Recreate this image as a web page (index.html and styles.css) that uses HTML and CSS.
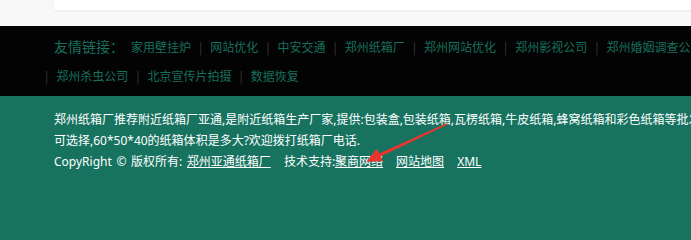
FILE: index.html
```html
<!DOCTYPE html>
<html lang="zh-CN">
<head>
<meta charset="utf-8">
<title>郑州亚通纸箱厂</title>
<link rel="stylesheet" href="styles.css">
</head>
<body>
<div class="page">
  <div class="top"><div class="card"></div></div>
  <div class="links">
    <div class="wrap">
      <div class="row">
        <span class="label">友情链接：</span>
        <a href="#">家用壁挂炉</a><span class="sep">|</span>
        <a href="#">网站优化</a><span class="sep">|</span>
        <a href="#">中安交通</a><span class="sep">|</span>
        <a href="#">郑州纸箱厂</a><span class="sep">|</span>
        <a href="#">郑州网站优化</a><span class="sep">|</span>
        <a href="#">郑州影视公司</a><span class="sep">|</span>
        <a href="#">郑州婚姻调查公司</a>
      </div>
      <div class="row row-second">
        <span class="sep">|</span><a href="#">郑州杀虫公司</a><span class="sep">|</span>
        <a href="#">北京宣传片拍摄</a><span class="sep">|</span>
        <a href="#">数据恢复</a>
      </div>
    </div>
  </div>
  <div class="footer">
    <div class="wrap">
      <p class="line">郑州纸箱厂推荐附近纸箱厂亚通,是附近纸箱生产厂家,提供:包装盒,包装纸箱,瓦楞纸箱,牛皮纸箱,蜂窝纸箱和彩色纸箱等批发定做,多种规格</p>
      <p class="line">可选择,60*50*40的纸箱体积是多大?欢迎拨打纸箱厂电话.</p>
      <p class="line copy">
        <span class="grp first">CopyRight © 版权所有: <a href="#">郑州亚通纸箱厂</a></span>
        <span class="grp">技术支持:<a href="#">聚商网络</a></span>
        <span class="grp"><a href="#">网站地图</a></span>
        <span class="grp"><a href="#">XML</a></span>
      </p>
    </div>
  </div>
  <svg class="arrow" width="691" height="202" viewBox="0 0 691 202" aria-hidden="true">
    <polygon points="446.6,123.2 379.2,153.6 376.6,148.8 366.5,161.8 383,161.2 380.6,156.6 447.4,124.8" fill="#e8352e"/>
  </svg>
</div>
</body>
</html>
```

FILE: styles.css
```css
html, body {
  margin: 0;
  padding: 0;
}
body {
  font-family: "Noto Sans CJK SC", sans-serif;
  overflow: hidden;
  background: #177360;
}
.page {
  position: relative;
  width: 691px;
  overflow: hidden;
}
.top {
  height: 26px;
  background: #f8f8f8;
}
.card {
  margin-left: 54px;
  width: 1200px;
  height: 10px;
  background: #ffffff;
  box-shadow: 0 1px 3px rgba(0, 0, 0, 0.06);
}
.links {
  background: #030303;
  height: 70px;
  box-sizing: border-box;
  padding-top: 5px;
}
.wrap {
  margin-left: 54px;
  width: 1200px;
}
.row {
  height: 30px;
  line-height: 30px;
  white-space: nowrap;
  font-size: 12px;
  color: #17705d;
  word-spacing: -4px;
}
.row a {
  color: #17705d;
  text-decoration: none;
  word-spacing: 0;
}
.label {
  font-size: 14px;
  margin-right: 7px;
  word-spacing: 0;
}
.sep {
  color: #3a3a3a;
  padding: 0 8px;
}
.row-second {
  margin-left: -17px;
}
.footer {
  background: #177360;
  min-height: 140px;
  box-sizing: border-box;
  padding-top: 13px;
  color: #ffffff;
  font-family: "Noto Sans", "Noto Sans CJK SC", sans-serif;
  font-size: 12px;
}
.line {
  margin: 0;
  line-height: 21px;
  white-space: nowrap;
}
.footer a {
  color: #ffffff;
  text-decoration: underline;
}
.copy {
  display: flex;
  gap: 13px;
}
.first {
  word-spacing: 1.5px;
}
.first a {
  word-spacing: 0;
}
.arrow {
  position: absolute;
  left: 0;
  top: 0;
  pointer-events: none;
}
```
